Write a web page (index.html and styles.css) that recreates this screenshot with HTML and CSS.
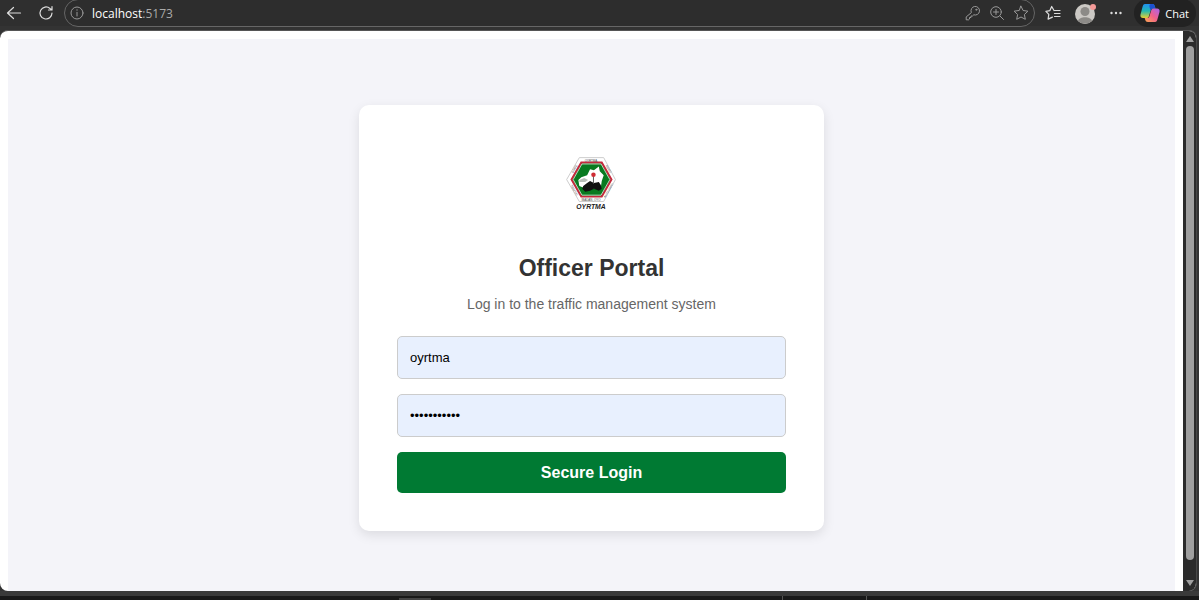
FILE: index.html
```
<!DOCTYPE html>
<html lang="en">
<head>
    <meta charset="UTF-8">
    <meta name="viewport" content="width=device-width, initial-scale=1.0">
    <title>Officer Portal</title>
    <link rel="stylesheet" href="styles.css">
</head>
<body>
    <header class="toolbar">
        <button class="icon-btn back" aria-label="Back">
            <svg width="16" height="16" viewBox="0 0 16 16"><path d="M14.500 8H1.500M7.500 2.500L1.500 8l6 5.500"/></svg>
        </button>
        <button class="icon-btn reload" aria-label="Reload">
            <svg width="16" height="16" viewBox="0 0 16 16"><path d="M14 8a6 6 0 1 1-2-4.500L14 5M14 1.500V5h-3.500"/></svg>
        </button>
        <div class="address-bar">
            <svg class="muted" width="14" height="14" viewBox="0 0 14 14"><circle cx="7" cy="7" r="6"/><path d="M7 6.300V10M7 3.700v.6"/></svg>
            <span class="url">localhost<span class="port">:5173</span></span>
            <button class="icon-btn muted" aria-label="Passwords">
                <svg width="16" height="16" viewBox="0 0 16 16"><path d="M6.200 7.300a4.300 4.300 0 1 1 2.600 2.500L7.500 11H6v1.500H4.500V14l-.8.800H1.200v-2.500z"/><circle cx="11.300" cy="4.700" r=".6"/></svg>
            </button>
            <button class="icon-btn muted" aria-label="Zoom">
                <svg width="16" height="16" viewBox="0 0 16 16"><circle cx="7" cy="7" r="5.300"/><path d="M11 11l3.500 3.500M4.500 7h5M7 4.500v5"/></svg>
            </button>
            <button class="icon-btn muted" aria-label="Add to favourites">
                <svg width="16" height="16" viewBox="0 0 16 16"><path d="M8 1.200l2.100 4.300 4.800.7-3.500 3.300.9 4.800L8 12l-4.300 2.300.9-4.800L1.100 6.200l4.800-.7z"/></svg>
            </button>
        </div>
        <button class="icon-btn favourites" aria-label="Favourites">
            <svg width="16" height="16" viewBox="0 0 16 16"><path d="M9 5.500L6.700 1.500 4.900 5.600l-4 .7 2.900 3.100-.7 4.700 4.300-2M9.500 5.500H15M9.500 8.500H15M9.500 11.500H15"/></svg>
        </button>
        <button class="icon-btn profile" aria-label="Profile">
            <svg width="24" height="24" viewBox="0 0 24 24">
                <circle cx="11" cy="13" r="10" fill="#cbc8c4" stroke="none"/>
                <circle cx="11" cy="10.500" r="4.500" fill="#8c8a87" stroke="none"/>
                <path d="M4 20c1-5 13-5 14 0a10 10 0 0 1-14 0z" fill="#8c8a87" stroke="none"/>
                <circle cx="19" cy="6" r="3" fill="#f59a98" stroke="none"/>
            </svg>
        </button>
        <button class="icon-btn more" aria-label="Settings and more">
            <svg width="12" height="4" viewBox="0 0 12 4"><g fill="#ddd" stroke="none"><circle cx="1.500" cy="2" r="1.200"/><circle cx="6" cy="2" r="1.200"/><circle cx="10.500" cy="2" r="1.200"/></g></svg>
        </button>
        <button class="chat-btn">
            <svg width="20" height="20" viewBox="0 0 20 20">
                <defs>
                    <linearGradient id="cool" x1="0" y1="0" x2="0" y2="1"><stop offset="0" stop-color="#2090f0"/><stop offset=".5" stop-color="#24b8b0"/><stop offset="1" stop-color="#e8cf30"/></linearGradient>
                    <linearGradient id="warm" x1="1" y1="0" x2="0" y2="1"><stop offset="0" stop-color="#a862f0"/><stop offset=".5" stop-color="#f0608c"/><stop offset="1" stop-color="#ffa850"/></linearGradient>
                </defs>
                <g stroke="none">
                    <path d="M5 1h7c2 0 2.500 1 3 3l.5 1.500H13c-1.500 0-2 1-2.500 2.500L9 13c-.5 1.500-1 2-2.500 2H3c-2 0-3-1.500-2.500-3.500L2.500 4C3 2 3.500 1 5 1z" fill="url(#cool)"/>
                    <path d="M11 1h1.500c1.500 0 2 1 2.500 3l.5 1.500H13c-1.500 0-2 1-2.500 2l-1-3.500C9.200 2.500 9.500 1 11 1z" fill="#1c50d0"/>
                    <path d="M15 19H8c-2 0-2.500-1-3-3l-.3-1H7c1.500 0 2-.5 2.500-2L11 8c.5-1.500 1-2.500 2.500-2.500H17c2 0 3 1.500 2.500 3.500L17.500 16c-.5 2-1 3-2.500 3z" fill="url(#warm)"/>
                </g>
            </svg>
            Chat
        </button>
    </header>

    <div class="window">
        <main class="page">
            <div class="login-container">
                <form class="login-card">
                    <svg class="logo" viewBox="0 0 80 80" role="img" aria-label="OYRTMA">
                        <path d="M27 15h25l12 22.500L52 60H27L14 37.500z" fill="#fff" stroke="#ccc"/>
                        <path d="M29 20h21l10 17.500L50 55H29L19 37.500z" fill="#087a20" stroke="#c4283c" stroke-width="2"/>
                        <path d="M29.700 21.500h19.600l9 16-9 16H29.700l-9-16z" fill="none" stroke="#e8efe8" stroke-width=".8"/>
                        <path d="M26 38l3-3 6-2 3-6 4 1 5-4 1 5 4 4-2 6-1 7-7 1-8 0-7-3z" fill="#fff"/>
                        <path d="M27 38l5-2 4 2-3 2-6 0z" fill="#b9bfb9"/>
                        <path d="M31 44l4-3 3-2 4 2 5-1 2 3 1 4-3 2-5-2-4 2-5 1-3-3z" fill="#111"/>
                        <path d="M41.500 33v9" stroke="#555" stroke-width="1"/>
                        <circle cx="41.500" cy="32.500" r="2.300" fill="#cf2d35"/>
                        <g class="logo-ring">
                            <text x="39" y="19">OYRTMA</text>
                            <text x="39" y="59">IBADAN, OYO</text>
                            <text transform="translate(23 27) rotate(-60)">STATE</text>
                            <text transform="translate(56 27) rotate(60)">ROAD</text>
                            <text transform="translate(21 49) rotate(60)">TRAFFIC</text>
                            <text transform="translate(58 49) rotate(-60)">AUTHORITY</text>
                        </g>
                        <text class="logo-name" x="39" y="68">OYRTMA</text>
                    </svg>
                    <h2>Officer Portal</h2>
                    <p>Log in to the traffic management system</p>
                    <input type="text" value="oyrtma" aria-label="Username">
                    <input type="password" value="officer2024" aria-label="Password">
                    <button type="submit" class="login-btn">Secure Login</button>
                </form>
            </div>
        </main>
        <div class="scrollbar" aria-hidden="true">
            <svg width="8" height="6" viewBox="0 0 8 6"><path d="M4 0l4 6H0z"/></svg>
            <div class="thumb"></div>
            <svg width="8" height="6" viewBox="0 0 8 6"><path d="M0 0h8L4 6z"/></svg>
        </div>
    </div>

    <footer class="taskbar">
        <div class="task-start"><span class="task-item"></span></div>
        <div class="task-middle"></div>
        <div class="task-end"></div>
    </footer>
</body>
</html>
```
FILE: styles.css
```
* {
    box-sizing: border-box;
}
body {
    display: flex;
    flex-direction: column;
    height: 100vh;
    margin: 0;
    overflow: hidden;
    background-color: #333;
    font-family: Arial, "Liberation Sans", sans-serif;
}
button {
    border: none;
    cursor: pointer;
}

/* browser toolbar */
.toolbar {
    display: flex;
    align-items: center;
    flex-shrink: 0;
    height: 26px;
    margin-bottom: 4px;
    padding: 0 3px 0 6px;
    background-color: #2f2f2f;
    font-family: "Segoe UI", "Open Sans", sans-serif;
}
.toolbar svg {
    display: block;
    flex-shrink: 0;
    fill: none;
    stroke: #ddd;
    stroke-width: 1.2;
    stroke-linecap: round;
    stroke-linejoin: round;
}
.toolbar .muted,
.toolbar .muted svg {
    stroke: #999;
    stroke-width: 1;
}
.icon-btn {
    padding: 0;
    background: none;
}
.reload {
    margin: 0 10px 0 16px;
}
.address-bar {
    display: flex;
    flex: 1;
    align-items: center;
    gap: 8px;
    height: 28px;
    padding: 0 5px;
    border: 1px solid #666;
    border-radius: 14px;
    background-color: #2d2d2d;
}
.url {
    flex: 1;
    color: #fff;
    font-size: 12px;
}
.port {
    color: #aaa;
}
.favourites {
    margin: 0 13px 0 10px;
}
.more {
    margin: 0 12px;
}
.chat-btn {
    display: flex;
    align-items: center;
    gap: 5px;
    height: 28px;
    padding: 0 7px 0 6px;
    border-radius: 14px;
    background-color: #222;
    color: #fff;
    font-family: inherit;
    font-size: 11px;
}

/* browser window */
.window {
    display: flex;
    flex: 1;
    min-height: 0;
    margin-right: 2px;
    overflow: hidden;
    border-top: 1px solid #555;
    border-right: 1px solid #484848;
    border-radius: 8px;
    background-color: #fff;
}
.page {
    flex: 1;
    padding: 8px 8px 0;
    overflow: hidden;
}
.scrollbar {
    display: flex;
    flex-direction: column;
    align-items: center;
    gap: 4px;
    width: 13px;
    padding: 5px 0;
    background-color: #2b2b2b;
}
.scrollbar svg {
    flex-shrink: 0;
    fill: #a0a0a0;
}
.thumb {
    flex: 1;
    width: 8px;
    margin-bottom: 16px;
    border-radius: 4px;
    background-color: #9f9f9f;
}

/* login page */
.login-container {
    display: flex;
    justify-content: center;
    align-items: center;
    height: calc(100vh - 42px);
    background-color: #f4f4f9;
}
.login-card {
    display: flex;
    flex-direction: column;
    width: 100%;
    max-width: 465px;
    padding: 38px;
    border-radius: 10px;
    background-color: #fff;
    box-shadow: 0 4px 12px rgba(0,0,0,0.1);
    text-align: center;
}
.logo {
    align-self: center;
    width: 78px;
    height: 78px;
    margin-bottom: 33px;
}
.logo text {
    text-anchor: middle;
}
.logo-ring {
    fill: #444;
    font-size: 3px;
}
.logo-name {
    fill: #222;
    font-size: 7px;
    font-style: italic;
    font-weight: bold;
}
.login-card h2 {
    margin: 0 0 12px;
    color: #333;
    font-size: 23px;
    line-height: 28px;
}
.login-card p {
    margin: 0 0 22px;
    color: #666;
    font-size: 14px;
    line-height: 20px;
}
.login-card input {
    height: 43px;
    margin-bottom: 15px;
    padding: 0 12px;
    border: 1px solid #ccc;
    border-radius: 5px;
    background-color: #e8f0fe;
    color: #000;
    font-family: inherit;
    font-size: 13px;
}
.login-btn {
    height: 41px;
    border-radius: 5px;
    background-color: #007a33;
    color: #fff;
    font-family: inherit;
    font-size: 16px;
    font-weight: bold;
}

/* strip of the taskbar under the window */
.taskbar {
    display: flex;
    flex-shrink: 0;
    height: 9px;
    border-top: 5px solid #3a3a3a;
    background-color: #191919;
}
.task-start {
    display: flex;
    justify-content: center;
    align-items: flex-end;
    width: 65.3%;
    padding-left: 4%;
    border-right: 1px solid #555;
}
.task-item {
    width: 32px;
    height: 2px;
    background-color: #444;
}
.task-middle {
    width: 7%;
    border-right: 1px solid #555;
}
```
